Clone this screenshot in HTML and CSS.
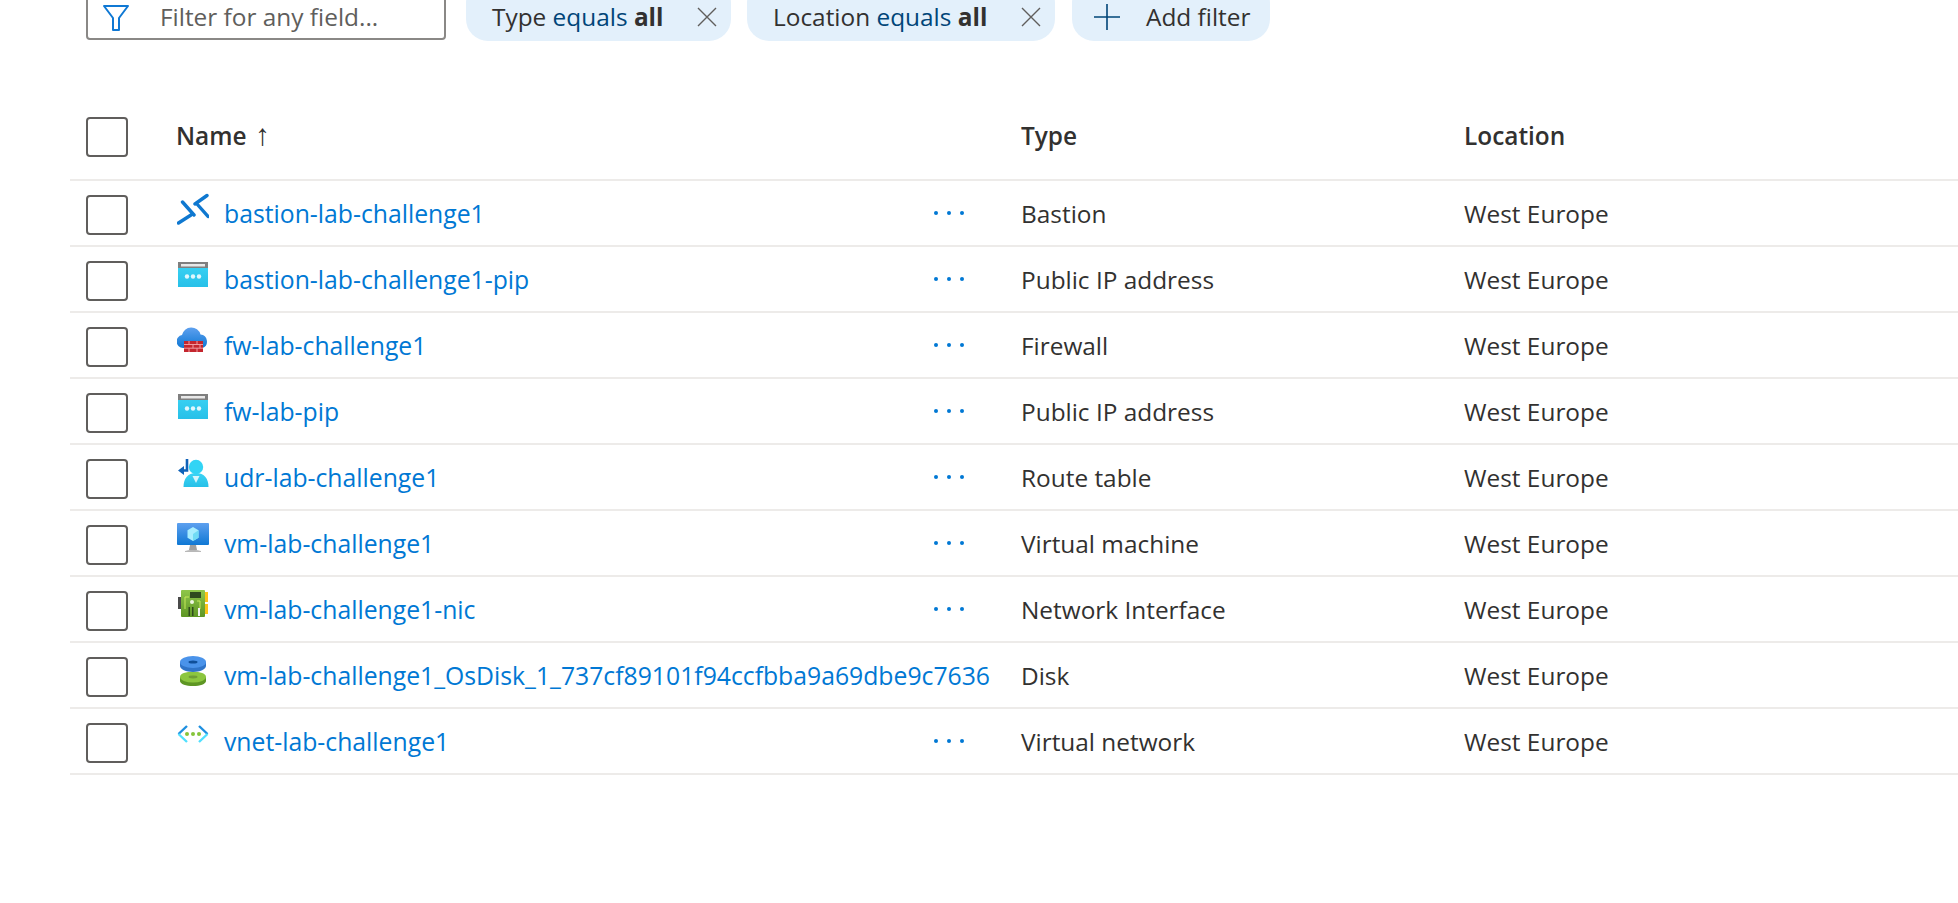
FILE: index.html
```html
<!DOCTYPE html>
<html lang="en">
  <head>
    <meta charset="UTF-8" />
    <title>Resources</title>
    <link rel="stylesheet" href="styles.css">
  </head>
  <body>
    <svg class="defs" width="0" height="0">
      <defs>
        <linearGradient id="cyan" x1="0" y1="0" x2="0" y2="1"><stop offset="0" stop-color="#3cd4f5"/><stop offset="1" stop-color="#27c0e8"/></linearGradient>
        <linearGradient id="blue" x1="0" y1="0" x2="0" y2="1"><stop offset="0" stop-color="#5ea0ef"/><stop offset="1" stop-color="#0f78d4"/></linearGradient>
        <linearGradient id="green" x1="0" y1="0" x2="0" y2="1"><stop offset="0" stop-color="#8fc64a"/><stop offset="1" stop-color="#5e9624"/></linearGradient>
      </defs>
    </svg>

    <div class="toolbar">
      <div class="search">
        <svg class="search-icon" viewBox="0 0 28 28" width="28" height="28"><path d="M2 3h24L17 15v12h-6V15z" fill="none" stroke="#0f78d4" stroke-width="2" stroke-linejoin="round"/></svg>
        <span>Filter for any field...</span>
      </div>
      <div class="pill pill-type">
        <span>Type <em>equals</em> <b>all</b></span>
        <svg viewBox="0 0 20 20" width="20" height="20"><path d="M1 1l18 18M19 1L1 19" stroke="#605e5c" stroke-width="1.4"/></svg>
      </div>
      <div class="pill pill-location">
        <span>Location <em>equals</em> <b>all</b></span>
        <svg viewBox="0 0 20 20" width="20" height="20"><path d="M1 1l18 18M19 1L1 19" stroke="#605e5c" stroke-width="1.4"/></svg>
      </div>
      <div class="pill pill-add">
        <svg viewBox="0 0 26 26" width="26" height="26"><path d="M13 0v26M0 13h26" stroke="#004578" stroke-width="1.6"/></svg>
        <span>Add filter</span>
      </div>
    </div>

    <div class="table">
      <div class="row head">
        <div class="check"></div>
        <div class="name-head">Name <span class="arrow">↑</span></div>
        <div></div>
        <div>Type</div>
        <div>Location</div>
      </div>

      <div class="row">
        <div class="check"></div>
        <a class="name">
          <svg class="icon" viewBox="0 0 32 32"><path d="M1.500 30L14 22M5.500 9L17 22M18 11L30 2.500M20 11l11 12.500" stroke="#0f78d0" stroke-width="3.400" stroke-linecap="round" fill="none"/></svg>
          <span>bastion-lab-challenge1</span>
        </a>
        <div class="more"><i></i><i></i><i></i></div>
        <div>Bastion</div>
        <div>West Europe</div>
      </div>

      <div class="row">
        <div class="check"></div>
        <a class="name">
          <svg class="icon" viewBox="0 0 32 32"><rect x="1" y="3" width="30" height="25" fill="url(#cyan)"/><rect x="1" y="3" width="30" height="6" fill="#7f7f7f"/><rect x="4" y="5" width="24" height="2.500" fill="#e8e8e8"/><circle cx="10" cy="17.500" r="2.200" fill="#fff" opacity=".85"/><circle cx="16" cy="17.500" r="2.200" fill="#fff" opacity=".85"/><circle cx="22" cy="17.500" r="2.200" fill="#fff" opacity=".85"/></svg>
          <span>bastion-lab-challenge1-pip</span>
        </a>
        <div class="more"><i></i><i></i><i></i></div>
        <div>Public IP address</div>
        <div>West Europe</div>
      </div>

      <div class="row">
        <div class="check"></div>
        <a class="name">
          <svg class="icon" viewBox="0 0 32 32"><path d="M6 23a6.500 6.500 0 0 1-1-12.900A9.500 9.500 0 0 1 23.500 9.500a7 7 0 0 1 2 13.500z" fill="url(#blue)"/><rect x="7" y="16" width="19" height="11" fill="#c4262e"/><path d="M7 19.500h19M7 23.200h19M12 16v3.500M20 16v3.500M16 19.500v3.700M23 19.500v3.700M12 23.200V27M20 23.200V27" stroke="#f09aa0" stroke-width="1"/></svg>
          <span>fw-lab-challenge1</span>
        </a>
        <div class="more"><i></i><i></i><i></i></div>
        <div>Firewall</div>
        <div>West Europe</div>
      </div>

      <div class="row">
        <div class="check"></div>
        <a class="name">
          <svg class="icon" viewBox="0 0 32 32"><rect x="1" y="3" width="30" height="25" fill="url(#cyan)"/><rect x="1" y="3" width="30" height="6" fill="#7f7f7f"/><rect x="4" y="5" width="24" height="2.500" fill="#e8e8e8"/><circle cx="10" cy="17.500" r="2.200" fill="#fff" opacity=".85"/><circle cx="16" cy="17.500" r="2.200" fill="#fff" opacity=".85"/><circle cx="22" cy="17.500" r="2.200" fill="#fff" opacity=".85"/></svg>
          <span>fw-lab-pip</span>
        </a>
        <div class="more"><i></i><i></i><i></i></div>
        <div>Public IP address</div>
        <div>West Europe</div>
      </div>

      <div class="row">
        <div class="check"></div>
        <a class="name">
          <svg class="icon" viewBox="0 0 32 32"><path d="M6.500 30c0-8 4-14 12.500-14s12.500 6 12.500 14z" fill="url(#cyan)"/><circle cx="19" cy="10" r="7.200" fill="#32d4f5"/><path d="M15.500 19h7L19 26z" fill="#fff" opacity=".8"/><path d="M10 2v11.500H5" fill="none" stroke="#0f62b8" stroke-width="2.600"/><path d="M7 9l-6 4.500L7 18z" fill="#0f62b8"/></svg>
          <span>udr-lab-challenge1</span>
        </a>
        <div class="more"><i></i><i></i><i></i></div>
        <div>Route table</div>
        <div>West Europe</div>
      </div>

      <div class="row">
        <div class="check"></div>
        <a class="name">
          <svg class="icon" viewBox="0 0 32 32"><rect x="0" y="0" width="32" height="22" rx="1" fill="url(#blue)"/><path d="M13 22h6l1 5h-8z" fill="#a0a0a0"/><path d="M8 28c2-1.500 14-1.500 16 0v1H8z" fill="#b8b8b8"/><path d="M16 4l5.500 3.200v7.600L16 18l-5.500-3.200V7.200z" fill="#a8eeff"/><path d="M16 11l5.500-3.800v7.600L16 18z" fill="#70dbf5"/></svg>
          <span>vm-lab-challenge1</span>
        </a>
        <div class="more"><i></i><i></i><i></i></div>
        <div>Virtual machine</div>
        <div>West Europe</div>
      </div>

      <div class="row">
        <div class="check"></div>
        <a class="name">
          <svg class="icon" viewBox="0 0 32 32"><rect x="1" y="8" width="3" height="12" fill="#4a4a4a"/><rect x="27" y="3" width="4" height="10" fill="#fcc419"/><rect x="27" y="15" width="4" height="10" fill="#fcc419"/><rect x="4" y="1" width="24" height="27" rx="1" fill="url(#green)"/><rect x="13" y="3" width="11" height="6" fill="#2f4a1e"/><path d="M8 8v12M8 8h4M20 12h3v8" fill="none" stroke="#c6e85a" stroke-width="1"/><circle cx="15" cy="13" r="2" fill="#eef6e0"/><path d="M11.500 18h1.500v9h-1.500zM15 18h1.500v9H15z" fill="#2f4a1e"/><rect x="21" y="19" width="2" height="8" fill="#f4f4f4"/></svg>
          <span>vm-lab-challenge1-nic</span>
        </a>
        <div class="more"><i></i><i></i><i></i></div>
        <div>Network Interface</div>
        <div>West Europe</div>
      </div>

      <div class="row">
        <div class="check"></div>
        <a class="name">
          <svg class="icon" viewBox="0 0 32 32"><path d="M3 22v4c0 3 6 5 13 5s13-2 13-5v-4z" fill="#5e9624"/><ellipse cx="16" cy="22" rx="13" ry="5.500" fill="#8cc63f"/><ellipse cx="16" cy="22" rx="4.500" ry="1.400" fill="#6f9e35"/><path d="M3 7v4c0 3 6 6 13 6s13-3 13-6V7z" fill="#2f74c8"/><ellipse cx="16" cy="7" rx="13" ry="6" fill="#4a93ea"/><ellipse cx="16" cy="7" rx="4.500" ry="1.500" fill="#0f4f99"/></svg>
          <span>vm-lab-challenge1_OsDisk_1_737cf89101f94ccfbba9a69dbe9c7636</span>
        </a>
        <div class="more"></div>
        <div>Disk</div>
        <div>West Europe</div>
      </div>

      <div class="row">
        <div class="check"></div>
        <a class="name">
          <svg class="icon" viewBox="0 0 32 32"><path d="M10 5L1.500 13" fill="none" stroke="#1d8fe0" stroke-width="2.400"/><path d="M22 5l8.500 8" fill="none" stroke="#1d8fe0" stroke-width="2.400"/><path d="M1.500 13L10 21M30.500 13L22 21" fill="none" stroke="#50e0ff" stroke-width="2.400"/><circle cx="10" cy="13" r="2" fill="#86c43a"/><circle cx="16" cy="13" r="2" fill="#86c43a"/><circle cx="22" cy="13" r="2" fill="#86c43a"/></svg>
          <span>vnet-lab-challenge1</span>
        </a>
        <div class="more"><i></i><i></i><i></i></div>
        <div>Virtual network</div>
        <div>West Europe</div>
      </div>
    </div>
  </body>
</html>
```

FILE: styles.css
```css
* {
  margin: 0;
  padding: 0;
  box-sizing: border-box;
}

body {
  background-color: #fff;
  color: #323130;
  font-family: "Open Sans", "Liberation Sans", sans-serif;
  font-size: 24.400px;
  overflow: hidden;
}

.defs {
  display: block;
}

.toolbar {
  display: flex;
  align-items: flex-end;
  height: 41px;
  padding-left: 86px;
  overflow: hidden;
}

.search {
  display: flex;
  align-items: center;
  flex: none;
  width: 360px;
  height: 60px;
  margin-bottom: 1px;
  padding: 14px 0 0 14px;
  border: 2px solid #8a8886;
  border-radius: 4px;
  color: #605e5c;
}

.search span,
.pill span {
  margin-bottom: 2px;
}

.search-icon {
  flex: none;
  margin-right: 30px;
}

.pill {
  display: flex;
  align-items: center;
  flex: none;
  height: 60px;
  padding-top: 12px;
  border-radius: 22px;
  background-color: #e3f0fb;
}

.pill em {
  font-style: normal;
  color: #004578;
}

.pill b {
  font-weight: 700;
}

.pill-type {
  justify-content: space-between;
  width: 265px;
  margin-left: 20px;
  padding-left: 26px;
  padding-right: 14px;
}

.pill-location {
  justify-content: space-between;
  width: 308px;
  margin-left: 16px;
  padding-left: 26px;
  padding-right: 14px;
}

.pill-add {
  gap: 26px;
  width: 198px;
  margin-left: 17px;
  padding-left: 22px;
}

.table {
  margin-top: 64px;
  margin-left: 70px;
}

.row {
  display: grid;
  grid-template-columns: 91px 757px 87px 443px 1fr;
  align-items: center;
  height: 66px;
  padding-left: 16px;
  border-bottom: 2px solid #edebe9;
}

.head {
  position: relative;
  height: 64px;
  margin-bottom: 12px;
  border-bottom: none;
  font-weight: 600;
}

.head div {
  margin-top: -3px;
}

.head::after {
  content: "";
  position: absolute;
  left: 0;
  right: 0;
  bottom: -12px;
  height: 2px;
  background-color: #edebe9;
}

.check {
  width: 42px;
  height: 40px;
  margin-top: 4px;
  border: 2px solid #605e5c;
  border-radius: 4px;
}

.head .check {
  margin-top: 0;
}

.name-head {
  margin-left: -1px;
}

.arrow {
  font-size: 30px;
  font-weight: 300;
  line-height: 1;
  margin-left: 2px;
}

.name {
  display: flex;
  align-items: center;
  gap: 15px;
  color: #0078d4;
  font-size: 24.750px;
  white-space: nowrap;
}

.icon {
  flex: none;
  width: 32px;
  height: 32px;
  margin-top: -8px;
}

.more {
  display: flex;
  gap: 9px;
}

.more i {
  width: 4px;
  height: 4px;
  border-radius: 50%;
  background-color: #0078d4;
}
```
